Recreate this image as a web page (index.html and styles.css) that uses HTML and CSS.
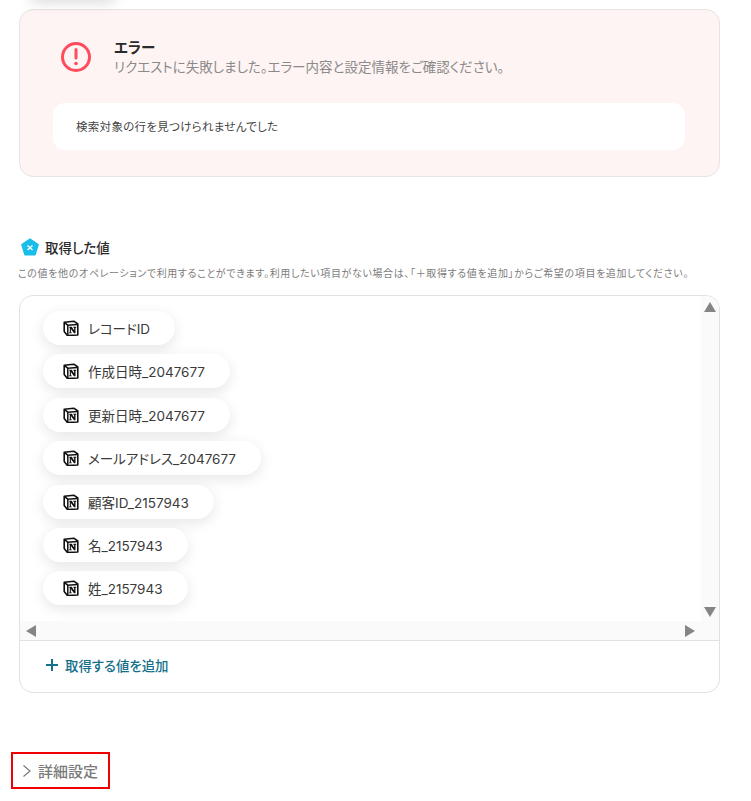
FILE: index.html
```html
<!DOCTYPE html>
<html lang="ja">

<head>
    <meta charset="utf-8">
    <meta name="viewport" content="width=device-width, initial-scale=1.0">
    <title>取得した値</title>
    <link rel="stylesheet" href="styles.css">
</head>

<body>
    <div class="top-shadow"></div>

    <section class="error-card">
        <div class="error-head">
            <svg class="error-icon" width="32" height="32" viewBox="0 0 32 32">
                <circle cx="16" cy="16" r="13.5" fill="none" stroke="#ff4b5c" stroke-width="3"></circle>
                <path d="M16 8.500v8.500" stroke="#ff4b5c" stroke-width="3" stroke-linecap="round"></path>
                <circle cx="16" cy="22.500" r="1.800" fill="#ff4b5c"></circle>
            </svg>
            <div>
                <h4 class="error-title">エラー</h4>
                <p class="error-text">リクエストに失敗しました。エラー内容と設定情報をご確認ください。</p>
            </div>
        </div>
        <div class="error-detail">検索対象の行を見つけられませんでした</div>
    </section>

    <div class="values-head">
        <svg width="18" height="18" viewBox="0 0 18 18">
            <path d="M9 .2l8.500 5.900c.3.2.4.5.3.8l-3.100 10c-.1.3-.4.5-.7.5H4c-.3 0-.6-.2-.7-.5L.2 6.900c-.1-.3 0-.6.3-.8z" fill="#19bdea"></path>
            <path d="M6.500 7.500l5 4.500M11.500 7.500l-5 4.500" stroke="#fff" stroke-width="1.300"></path>
        </svg>
        <h4 class="values-title">取得した値</h4>
    </div>
    <p class="values-note">この値を他のオペレーションで利用することができます。利用したい項目がない場合は、「＋取得する値を追加」からご希望の項目を追加してください。</p>

    <section class="values-box">
        <div class="scroll-row">
            <div class="pill-list">
                <div class="pill"><svg class="notion"><use href="#notion"></use></svg>レコードID</div>
                <div class="pill"><svg class="notion"><use href="#notion"></use></svg>作成日時_2047677</div>
                <div class="pill"><svg class="notion"><use href="#notion"></use></svg>更新日時_2047677</div>
                <div class="pill"><svg class="notion"><use href="#notion"></use></svg>メールアドレス_2047677</div>
                <div class="pill"><svg class="notion"><use href="#notion"></use></svg>顧客ID_2157943</div>
                <div class="pill"><svg class="notion"><use href="#notion"></use></svg>名_2157943</div>
                <div class="pill"><svg class="notion"><use href="#notion"></use></svg>姓_2157943</div>
            </div>
            <div class="bar-v">
                <span class="arrow arrow-up"></span>
                <span class="arrow arrow-down"></span>
            </div>
        </div>
        <div class="bar-h">
            <span class="arrow arrow-left"></span>
            <span class="arrow arrow-right"></span>
        </div>
        <div class="add-row">
            <svg width="14" height="14" viewBox="0 0 14 14">
                <path d="M7 1v12M1 7h12" stroke="#14708a" stroke-width="2"></path>
            </svg>
            <span>取得する値を追加</span>
        </div>
    </section>

    <div class="detail-toggle">
        <svg width="10" height="14" viewBox="0 0 10 14">
            <path d="M1.500 1.500L8 7l-6.500 5.500" fill="none" stroke="#7a7a7a" stroke-width="1.200"></path>
        </svg>
        <span>詳細設定</span>
    </div>

    <svg width="0" height="0" class="defs">
        <symbol id="notion" viewBox="0 0 16 16">
            <path d="M1.200 2.200L10.800 1.200 14.800 4V15L4.400 15.500 1.200 11.500z" fill="#fff" stroke="#111" stroke-width="1.600" stroke-linejoin="round"></path>
            <path d="M1.600 2.600L4.800 5.200l9.600-.8" fill="none" stroke="#111" stroke-width="1.500"></path>
            <path d="M4.800 5.200V15" stroke="#111" stroke-width="1.500"></path>
            <path d="M6.300 6.800h2.500l2.300 3.800V7.700h-.8v-.9h3v.9h-.8v5.600h-1.500L7.900 9v3.400h.9v.9H6v-.9h.8V7.700h-.5z" fill="#111"></path>
        </symbol>
    </svg>
</body>

</html>
```
FILE: styles.css
```css
body {
    margin: 0;
    background-color: #fff;
    color: #333;
    font-family: Inter, "Noto Sans CJK JP", sans-serif;
    font-feature-settings: "palt";
    overflow: hidden;
    padding: 9px 31px 0 19px;
}

h4,
p {
    margin: 0;
}

.defs {
    display: block;
    height: 0;
}

.top-shadow {
    position: absolute;
    left: 30px;
    top: -14px;
    width: 86px;
    height: 14px;
    border-radius: 7px;
    box-shadow: 0 2px 14px rgba(0, 0, 0, 0.16);
}

.error-card {
    box-sizing: border-box;
    height: 168px;
    padding: 29px 34px 0 33px;
    background-color: #fef4f3;
    border: 1px solid #e8e4e4;
    border-radius: 14px;
}

.error-head {
    display: flex;
    align-items: center;
    height: 36px;
    gap: 22px;
    padding-left: 7px;
}

.error-title {
    font-size: 14.500px;
    line-height: 20px;
    padding-top: 1px;
    font-weight: 700;
    color: #2b2b2b;
}

.error-text {
    font-size: 13.500px;
    line-height: 19px;
    color: #8a8a8a;
}

.error-detail {
    box-sizing: border-box;
    height: 47px;
    margin-top: 28px;
    padding-left: 23px;
    background-color: #fff;
    border-radius: 12px;
    font-size: 11.500px;
    letter-spacing: 0.3px;
    line-height: 48px;
    color: #444;
}

.values-head {
    display: flex;
    align-items: center;
    gap: 6px;
    margin-top: 60px;
    padding-left: 2px;
    height: 20px;
}

.values-title {
    font-size: 13.500px;
    font-weight: 500;
    color: #2b2b2b;
}

.values-note {
    margin: 8px 0 0 -1px;
    font-size: 10px;
    letter-spacing: 0.63px;
    line-height: 16px;
    color: #7d7d7d;
    white-space: nowrap;
}

.values-box {
    box-sizing: border-box;
    height: 398px;
    margin-top: 14px;
    border: 1px solid #e2e2e2;
    border-radius: 14px;
    overflow: hidden;
}

.scroll-row {
    display: flex;
    height: 325px;
}

.pill-list {
    flex: 1;
    display: flex;
    flex-direction: column;
    align-items: flex-start;
    gap: 9.400px;
    padding: 15px 0 0 23px;
}

.pill {
    display: flex;
    align-items: center;
    gap: 9px;
    height: 34px;
    padding: 0 25px 0 20px;
    background-color: #fff;
    border-radius: 17px;
    box-shadow: 0 4px 14px rgba(0, 0, 0, 0.1);
    font-size: 13.500px;
    color: #3a3a3a;
    white-space: nowrap;
}

.notion {
    width: 16px;
    height: 16px;
    flex-shrink: 0;
}

.bar-v {
    width: 18px;
    flex-shrink: 0;
    display: flex;
    flex-direction: column;
    align-items: center;
    justify-content: space-between;
    padding: 6px 0 4px;
    box-sizing: border-box;
    background-color: #fafafa;
}

.bar-h {
    box-sizing: border-box;
    height: 20px;
    display: flex;
    align-items: center;
    justify-content: space-between;
    padding: 0 24px 0 6px;
    background-color: #fafafa;
    border-bottom: 1px solid #e2e2e2;
}

.arrow {
    display: block;
    width: 0;
    height: 0;
    border-style: solid;
    border-color: transparent;
}

.arrow-up {
    border-width: 0 6.500px 10px;
    border-bottom-color: #858585;
}

.arrow-down {
    border-width: 10px 6.500px 0;
    border-top-color: #858585;
}

.arrow-left {
    border-width: 6.500px 10px 6.500px 0;
    border-right-color: #858585;
}

.arrow-right {
    border-width: 6.500px 0 6.500px 10px;
    border-left-color: #858585;
}

.add-row {
    display: flex;
    align-items: center;
    gap: 6px;
    height: 48px;
    padding-left: 25px;
    font-size: 13.400px;
    font-weight: 500;
    color: #14708a;
}

.detail-toggle {
    display: inline-flex;
    align-items: center;
    gap: 6px;
    box-sizing: border-box;
    width: 99px;
    height: 37px;
    margin: 59px 0 0 -8px;
    padding: 0 9px;
    border: 2px solid #f00000;
    font-size: 15px;
    font-weight: 500;
    color: #7a7a7a;
}
```
